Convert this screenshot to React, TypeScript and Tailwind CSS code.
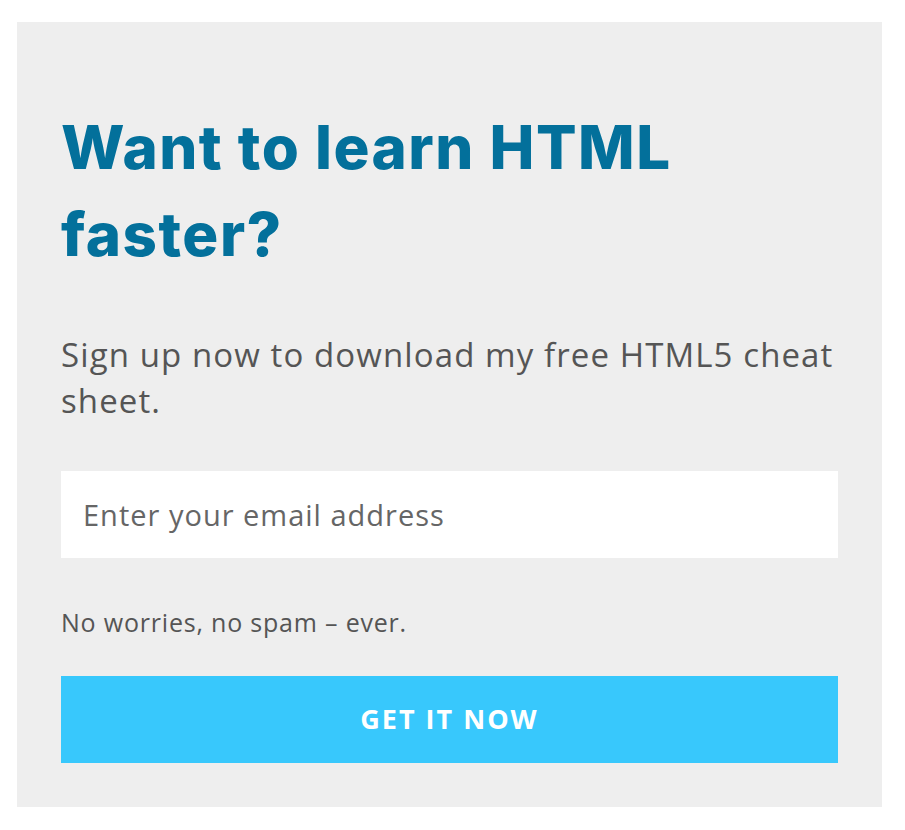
import React from "react";

export default function App() {
  return (
    <div className="min-h-screen bg-white pt-[22px] pl-[17px] font-['Open_Sans',sans-serif]">
      <div className="w-[865px] bg-[#eeeeee] p-[44px] flex flex-col">
        <h1 className="mt-[38px] font-['Inter',sans-serif] text-[60px] leading-[87px] font-extrabold text-[#03709b] tracking-[1.5px]">
          Want to learn HTML
          <br />
          faster?
        </h1>
        <p className="mt-[54px] text-[33px] leading-[46px] text-[#555555] tracking-[1.1px]">
          Sign up now to download my free HTML5 cheat sheet.
        </p>
        <input
          type="email"
          placeholder="Enter your email address"
          className="mt-[47px] h-[87px] w-full bg-white px-[22px] text-[29px] tracking-[1px] text-[#555555] placeholder:text-[#666666] outline-none"
        />
        <p className="mt-[46px] text-[25px] leading-[36px] tracking-[0.8px] text-[#555555]">
          No worries, no spam – ever.
        </p>
        <button className="mt-[36px] h-[87px] w-full bg-[#38c8fc] text-white text-[27px] font-bold tracking-[2px] flex items-center justify-center">
          GET IT NOW
        </button>
      </div>
    </div>
  );
}
